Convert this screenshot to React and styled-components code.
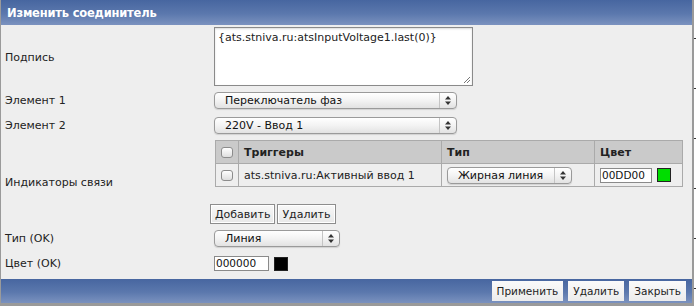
import React from 'react';
import styled, { createGlobalStyle } from 'styled-components';

const GlobalStyle = createGlobalStyle`
  html, body {
    margin: 0;
    padding: 0;
    background: #ffffff;
  }
  body {
    font-family: "DejaVu Sans", Verdana, sans-serif;
    font-size: 11px;
    color: #222222;
  }
`;

const Page = styled.div`
  display: flex;
  width: 696px;
  height: 306px;
  overflow: hidden;
`;

const Window = styled.div`
  display: flex;
  flex-direction: column;
  width: 691px;
  height: 303px;
  border-left: 1px solid #9a9a9a;
  border-right: 2px solid #9a9a9a;
  border-bottom: 3px solid #9a9a9a;
`;

const Gutter = styled.div`
  flex: 1;
  background:
    repeating-linear-gradient(
      to bottom,
      transparent 0px,
      transparent 38px,
      #333333 38px,
      #333333 39px,
      transparent 39px,
      transparent 50px
    );
  background-size: 2px 100%;
  background-repeat: no-repeat;
  background-position: right top;
`;

const Header = styled.div`
  height: 25px;
  display: flex;
  align-items: center;
  padding-left: 6px;
  background: linear-gradient(to bottom, #4766a0 0%, #5b78ad 55%, #7b92bf 100%);
  color: #ffffff;
  font-weight: bold;
  font-size: 11.5px;
  letter-spacing: -0.2px;
`;

const Body = styled.div`
  flex: 1;
  background: #eeeeee;
  display: flex;
  flex-direction: column;
  padding-bottom: 2px;
`;

const Row = styled.div`
  display: grid;
  grid-template-columns: 213px 1fr;
  align-items: center;
  height: ${p => p.$h}px;
  padding-top: ${p => p.$pt || 0}px;
  box-sizing: border-box;
`;

const Label = styled.div`
  padding-left: 4px;
`;

const Control = styled.div`
  display: flex;
  flex-direction: column;
  align-items: flex-start;
  align-self: ${p => p.$top ? 'start' : 'center'};
`;

const TextArea = styled.div`
  position: relative;
  background: #ffffff;
  border: 1px solid #8a8a8a;
  box-shadow: inset 0 1px 2px rgba(0,0,0,0.15);
  padding: 3px 3px;
  box-sizing: content-box;
  width: 251px;
  height: 51px;
  color: #222;
`;

const Grip = styled.svg`
  position: absolute;
  right: 1px;
  bottom: 1px;
`;

const SelectBox = styled.div`
  display: flex;
  align-items: center;
  width: ${p => p.$w}px;
  height: 17px;
  box-sizing: border-box;
  border: 1px solid #9a9a9a;
  border-radius: 4px;
  background: linear-gradient(to bottom, #ffffff 0%, #f3f3f3 50%, #e2e2e2 100%);
  box-shadow: 0 1px 1px rgba(0,0,0,0.12);
`;

const SelectText = styled.span`
  flex: 1;
  padding-left: 10px;
  color: #111;
`;

const SelectArrows = styled.span`
  width: 16px;
  height: 100%;
  display: flex;
  align-items: center;
  justify-content: center;
  border-left: 1px solid #c4c4c4;
`;

const Table = styled.table`
  border-collapse: collapse;
  width: 468px;
  margin-left: 1px;
  margin-top: 2px;
`;

const Th = styled.th`
  background: #cacaca;
  border: 1px solid #aaaaaa;
  height: 22px;
  text-align: left;
  padding: 0 5px;
  font-weight: bold;
  color: #222;
  width: ${p => p.$w ? p.$w + 'px' : 'auto'};
`;

const Td = styled.td`
  border: 1px solid #aaaaaa;
  height: 22px;
  padding: 0 5px;
  width: ${p => p.$w ? p.$w + 'px' : 'auto'};
`;

const CheckBox = styled.span`
  display: block;
  width: 10px;
  height: 9px;
  border: 1px solid #8c8c8c;
  border-radius: 3px;
  background: linear-gradient(to bottom, #ffffff, #dedede);
  margin: 0 auto;
`;

const ColorCell = styled.div`
  display: flex;
  align-items: center;
  gap: 5px;
`;

const ColorInput = styled.div`
  width: ${p => p.$w}px;
  height: 15px;
  box-sizing: border-box;
  border: 1px solid #8a8a8a;
  background: #ffffff;
  font-size: 10.5px;
  padding-left: 1px;
  line-height: 13px;
  color: #111;
`;

const Swatch = styled.span`
  width: 12px;
  height: 12px;
  border: 1px solid #222;
  background: ${p => p.$color};
`;

const Buttons = styled.div`
  display: flex;
  gap: 2px;
  margin-top: 17px;
  margin-left: -4px;
`;

const Button = styled.button`
  font-family: "DejaVu Sans", Verdana, sans-serif;
  font-size: 11px;
  color: #222;
  height: 20px;
  padding: 0 4px;
  background: linear-gradient(to bottom, #f8f8f8, #e8e8e8);
  border: 1px solid #8d8d8d;
  border-radius: 0;
  box-shadow: inset 0 0 0 1px #ffffff;
`;

const Footer = styled.div`
  height: 24px;
  display: flex;
  justify-content: flex-end;
  align-items: center;
  gap: 5px;
  padding-right: 6px;
  background: linear-gradient(to bottom, #4766a0 0%, #5b78ad 55%, #7b92bf 100%);
`;

const FooterButton = styled(Button)`
  border: none;
  box-shadow: none;
  background: linear-gradient(to bottom, #fafafa, #ececec);
  height: 20px;
  padding: 0 5px;
  font-size: 10.5px;
`;

const Arrows = () => (
  <svg width="6" height="9" viewBox="0 0 6 9">
    <path d="M3 0 L6 3.5 L0 3.5 Z" fill="#333" />
    <path d="M3 9 L6 5.5 L0 5.5 Z" fill="#333" />
  </svg>
);

const Select = ({ width, children }) => (
  <SelectBox $w={width}>
    <SelectText>{children}</SelectText>
    <SelectArrows><Arrows /></SelectArrows>
  </SelectBox>
);

export default function App() {
  return (
    <Page>
      <GlobalStyle />
      <Window>
        <Header>Изменить соединитель</Header>
        <Body>
          <Row $h={63} $pt={2}>
            <Label>Подпись</Label>
            <Control $top>
              <TextArea>
                {'{ats.stniva.ru:atsInputVoltage1.last(0)}'}
                <Grip width="8" height="8" viewBox="0 0 8 8">
                  <path d="M1 7 L7 1 M4 7 L7 4" stroke="#777" strokeWidth="1" />
                </Grip>
              </TextArea>
            </Control>
          </Row>
          <Row $h={25}>
            <Label>Элемент 1</Label>
            <Control><Select width={243}>Переключатель фаз</Select></Control>
          </Row>
          <Row $h={25}>
            <Label>Элемент 2</Label>
            <Control><Select width={243}>220V - Ввод 1</Select></Control>
          </Row>
          <Row $h={88}>
            <Label>Индикаторы связи</Label>
            <Control $top>
              <Table>
                <thead>
                  <tr>
                    <Th $w={12}><CheckBox /></Th>
                    <Th $w={192}>Триггеры</Th>
                    <Th $w={142}>Тип</Th>
                    <Th>Цвет</Th>
                  </tr>
                </thead>
                <tbody>
                  <tr>
                    <Td><CheckBox /></Td>
                    <Td>ats.stniva.ru:Активный ввод 1</Td>
                    <Td><Select width={125}>Жирная линия</Select></Td>
                    <Td>
                      <ColorCell>
                        <ColorInput $w={52}>00DD00</ColorInput>
                        <Swatch $color="#00dd00" />
                      </ColorCell>
                    </Td>
                  </tr>
                </tbody>
              </Table>
              <Buttons>
                <Button>Добавить</Button>
                <Button>Удалить</Button>
              </Buttons>
            </Control>
          </Row>
          <Row $h={25}>
            <Label>Тип (OK)</Label>
            <Control><Select width={126}>Линия</Select></Control>
          </Row>
          <Row $h={25}>
            <Label>Цвет (OK)</Label>
            <Control>
              <ColorCell>
                <ColorInput $w={55}>000000</ColorInput>
                <Swatch $color="#000000" />
              </ColorCell>
            </Control>
          </Row>
        </Body>
        <Footer>
          <FooterButton>Применить</FooterButton>
          <FooterButton>Удалить</FooterButton>
          <FooterButton>Закрыть</FooterButton>
        </Footer>
      </Window>
      <Gutter />
    </Page>
  );
}
